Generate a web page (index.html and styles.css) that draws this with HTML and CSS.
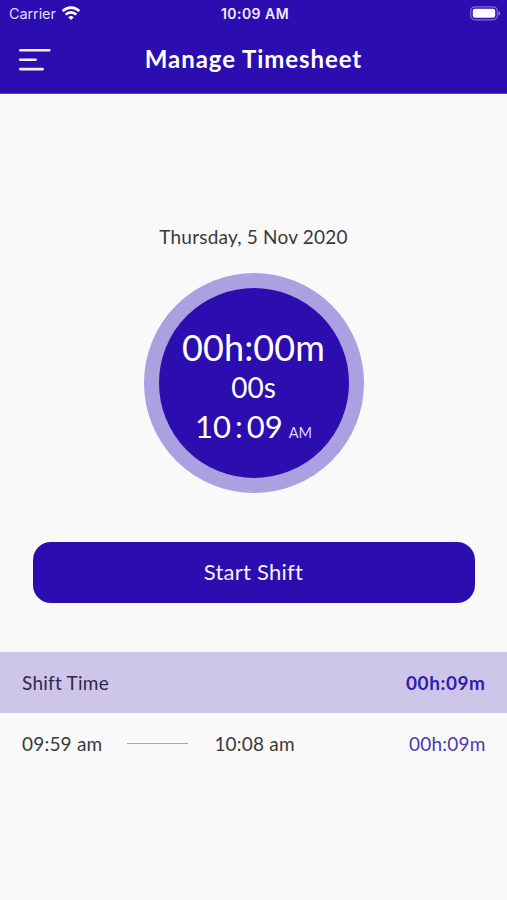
FILE: index.html
```html
<!DOCTYPE html>
<html lang="en">
<head>
<meta charset="utf-8">
<title>Manage Timesheet</title>
<link rel="stylesheet" href="styles.css">
</head>
<body>
<header class="header">
  <div class="status">
    <div class="carrier"><span>Carrier</span>
      <svg class="wifi" width="20" height="16" viewBox="0 0 20 16" fill="none" stroke="#fff" stroke-width="2.7"><path d="M1.7 6.1a11.8 11.8 0 0 1 16.6 0M4.7 9.6a7.5 7.5 0 0 1 10.6 0"/><path d="M10 15 7.2 12.3a4 4 0 0 1 5.6 0Z" fill="#fff" stroke="none"/></svg>
    </div>
    <span class="clock">10:09 AM</span>
    <svg class="battery" width="31" height="15" viewBox="0 0 31 15"><rect x=".8" y=".8" width="26.4" height="13" rx="4" fill="none" stroke="#fff" stroke-opacity=".4" stroke-width="1.2"/><rect x="2.8" y="2.8" width="22.4" height="9" rx="2" fill="#fff"/><path d="M28.4 5v4.8q1.8-.8 1.8-2.4T28.4 5Z" fill="#fff" fill-opacity=".45"/></svg>
  </div>
  <div class="nav">
    <svg class="menu" width="34" height="24" viewBox="0 0 34 24" stroke="#f4efff" stroke-width="2.6" stroke-linecap="round"><path d="M2.3 2.2h29M2.3 11.7h15.3M2.3 21.1h22.4"/></svg>
    <h1 class="title">Manage Timesheet</h1>
  </div>
</header>
<main class="main">
  <p class="date">Thursday, 5 Nov 2020</p>
  <section class="dial">
    <div class="elapsed">00h:00m</div>
    <div class="seconds">00s</div>
    <div class="now"><span class="digits">10<span class="colon">:</span>09</span><span class="period">AM</span></div>
  </section>
  <button class="start" type="button"><span>Start Shift</span></button>
  <section class="shifts">
    <div class="total"><span class="label">Shift Time</span><span class="sum">00h:09m</span></div>
    <div class="entry"><span class="from">09:59 am</span><span class="line"></span><span class="to">10:08 am</span><span class="length">00h:09m</span></div>
  </section>
</main>
</body>
</html>
```

FILE: styles.css
```css
* { box-sizing: border-box; }
body { margin: 0; min-height: 900px; background: #f9f9f9; color: #393939; font-family: Lato, "Liberation Sans", sans-serif; }
.header { height: 94px; background: #2c0db0; color: #fff; border-bottom: 1px solid #5a40c0; }
.status { display: grid; grid-template-columns: 1fr auto 1fr; height: 28px; padding: 0 6px 0 9px; align-items: center; font: 14.5px/28px Inter, sans-serif; }
.carrier { display: flex; align-items: center; gap: 5px; color: #e2dcff; letter-spacing: -.1px; }
.wifi { margin-top: -3px; }
.clock { font-weight: 600; font-size: 14px; letter-spacing: .45px; color: #f0ebff; }
.battery { justify-self: end; margin-top: -2px; }
.nav { display: grid; grid-template-columns: 34px 1fr 34px; align-items: center; height: 64px; padding: 0 18px; }
.title { margin: -2px 0 0; text-align: center; font-size: 24px; line-height: 32px; font-weight: 700; white-space: nowrap; letter-spacing: .93px; }
.main { display: flex; flex-direction: column; align-items: center; }
.date { margin: 130px 0 0; font-size: 19px; line-height: 26px; letter-spacing: .2px; }
.dial { width: 220px; height: 220px; margin-top: 23px; padding-top: 37px; border: 15px solid #aba0e0; border-radius: 50%; background: #2c0db0; color: #fff; text-align: center; }
.elapsed { font-size: 36px; line-height: 44px; letter-spacing: .1px; }
.seconds { font-size: 28px; line-height: 37px; }
.now { display: flex; justify-content: center; align-items: baseline; gap: 6px; line-height: 40px; }
.digits { font-size: 31px; }
.colon { margin: 0 4px; }
.period { font-size: 14.5px; color: #ddd5ff; }
.start { width: 442px; height: 61px; margin: 49px 0 0; padding: 0 0 2px; border: 0; border-radius: 18px; background: #2c0db0; color: #f5f0ff; font: 22px/30px Lato, sans-serif; letter-spacing: .25px; }
.shifts { width: 100%; margin-top: 49px; font-size: 19px; line-height: 26px; }
.total, .entry { display: flex; align-items: center; padding: 0 22px; }
.total { height: 61px; background: #cdc6e9; justify-content: space-between; }
.label { color: #30264f; letter-spacing: .25px; }
.sum { font-weight: 700; color: #321bae; letter-spacing: .55px; margin-right: -.5px; }
.entry { height: 70px; padding-bottom: 7px; border-bottom: 1px solid #f5f5f7; letter-spacing: .2px; }
.line { width: 61px; height: 1px; margin: 0 26px 2px 25px; background: #a99bdc; }
.length { margin-left: auto; margin-right: -.5px; color: #4d37b5; }
```
